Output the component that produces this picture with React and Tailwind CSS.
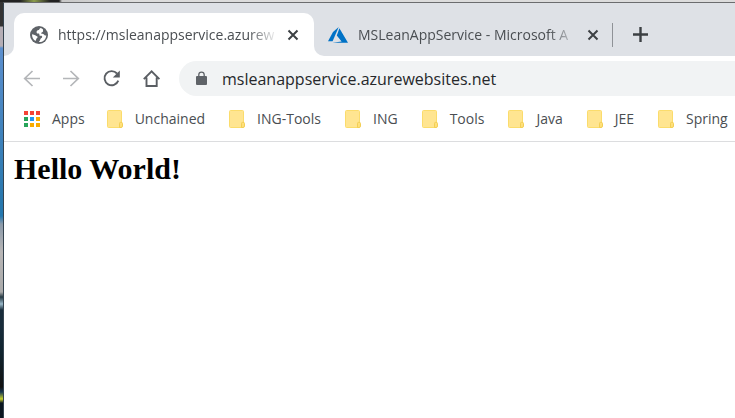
const folders = ["Unchained", "ING-Tools", "ING", "Tools", "Java", "JEE", "Spring"];

function GlobeIcon() {
  return (
    <svg viewBox="0 0 18 18" className="size-[18px] shrink-0" aria-hidden="true">
      <circle cx="9" cy="9" r="9" fill="#5f6368" />
      <path
        d="M10.6 1.900c-1 .5-1.600 1.300-1.500 2.200-1.700-.2-2.700.9-2.500 2.300.1.900 1 1.200 1.900 1.200.8 0 .9.7.9 1.300 0 .8.8.9 1.600.9 1 0 1.300.6 1.100 1.400-.2.700-1 .900-1.500 1.500-.5.700-.2 1.500-1.100 2.300-.3.300-.5.700-.5 1.100 3.900.2 7.200-2.700 7.200-6.900-1.100.6-1.700.1-2.200-.7-.5-.8-1.300-.9-2-.8-.9.100-1-.8-.4-1.300.7-.6 1.500-.5 1.500-1.500 0-.6-.3-.9 0-1.400-.8-.8-1.600-1.300-2.500-1.600z"
        fill="#fff"
      />
      <path
        d="M2 8.300c1.400.1 2.600.5 3.700 1.300.9.600 1.900.7 1.900 1.700 0 .9-1.100.8-1.300 1.700-.1.700-.4 1.300-.9 1.900C3.200 13.600 1.900 11.200 2 8.300z"
        fill="#fff"
      />
    </svg>
  );
}

function AzureIcon() {
  return (
    <svg viewBox="0 0 20 16" className="h-4 w-5 shrink-0" aria-hidden="true">
      <path d="M10.700 0 5 5 0 14.300h4.600z" fill="#0072c6" />
      <path d="m11.400 1.300-2.600 7.200 4.800 6-9.200 1.300H20z" fill="#0072c6" />
    </svg>
  );
}

function CloseIcon() {
  return (
    <svg viewBox="0 0 12 12" className="size-3" aria-hidden="true">
      <path d="M1.500 1.500l9 9M10.500 1.500l-9 9" stroke="#3c4043" strokeWidth="2" />
    </svg>
  );
}

function FolderIcon() {
  return (
    <svg viewBox="0 0 16 18" className="h-[18px] w-4 shrink-0" aria-hidden="true">
      <rect x=".5" y=".5" width="14" height="17" rx="1" fill="#ffe591" stroke="#fbdc6c" />
      <path d="M12.500 17.500v-4q0-1.200 1.200-1.200h.3q1.500 0 1.500 1.200v2.500q0 1.500-1.500 1.500z" fill="#ffe07a" stroke="#f3cf55" />
    </svg>
  );
}

function AppsIcon() {
  const colors = ["#f44336", "#f44336", "#f44336", "#27a55a", "#2196f3", "#f9ab00", "#27a55a", "#f9ab00", "#f9ab00"];
  return (
    <span className="grid shrink-0 grid-cols-3 gap-0.5" aria-hidden="true">
      {colors.map((c, i) => (
        <span key={i} className="size-1" style={{ background: c }} />
      ))}
    </span>
  );
}

function Tab({ icon, title, label }) {
  return (
    <>
      {icon}
      <span className="ml-[10px] w-[220px] overflow-hidden whitespace-nowrap text-sm [mask-image:linear-gradient(to_right,black_190px,transparent_220px)]">
        {title}
      </span>
      <button type="button" aria-label={label} className="ml-[9px]">
        <CloseIcon />
      </button>
    </>
  );
}

export default function App() {
  return (
    <div className="flex min-h-screen flex-col bg-[#dadada] font-['Open_Sans','Noto_Sans',sans-serif] text-[#4a4e52]">
      <div className="h-0.5 bg-[linear-gradient(to_right,#222_0_20px,#8c9d4c_34px,#222_50px_59px,#c8c8c8_62px,#dcdcdc_135px)]" />
      <div className="flex grow">
        <div className="w-[3px] shrink-0 bg-[linear-gradient(to_bottom,#333_0_24px,#b5aeb5_25px_44px,#5c8fce_46px,#2878ae_200px,#2378b0_214px,#8b9aaa_222px,#b8b6b6_250px,#aaa_290px,#263943_295px,#9bb9ca_302px,#182c3b_308px_325px,#10242f_350px,#111_385px,#163750_390px,#c7d12c_397px,#0b1620_401px)]" />
        <div className="flex min-w-0 grow flex-col border-l border-t border-l-[#34434f] border-t-[#6b6c6e] bg-white">
          <header>
            <div className="flex h-[53px]">
              <div className="w-[10px] shrink-0 rounded-br-[10px] bg-[#dee1e6]" />
              <div className="w-[300px] shrink-0 bg-[linear-gradient(to_bottom,#dee1e6_50%,white_50%)] pt-[10px]">
                <div className="flex h-[43px] items-center rounded-t-[10px] bg-white pl-4">
                  <Tab icon={<GlobeIcon />} title="https://msleanappservice.azurew" label="Close first tab" />
                </div>
              </div>
              <div className="flex min-w-0 grow items-center overflow-hidden rounded-bl-[10px] bg-[#dee1e6] pl-[14px] pt-[10px]">
                <Tab icon={<AzureIcon />} title="MSLeanAppService - Microsoft A" label="Close second tab" />
                <span className="ml-[13px] h-6 w-px shrink-0 bg-[#8f9297]" />
                <button type="button" aria-label="New tab" className="ml-5">
                  <svg viewBox="0 0 15 15" className="size-[15px]" aria-hidden="true">
                    <path d="M7.500 0v15M0 7.500h15" stroke="#3c4043" strokeWidth="2.400" />
                  </svg>
                </button>
              </div>
            </div>
            <nav aria-label="Navigation" className="flex h-[45px] items-center pl-[19px]">
              <button type="button" aria-label="Back">
                <svg viewBox="0 0 18 18" className="size-[18px]" fill="none" stroke="#b4b6b9" strokeWidth="1.700" aria-hidden="true">
                  <path d="M17 8.500H2M9.500 1 1.700 8.500l7.800 7.500" />
                </svg>
              </button>
              <button type="button" aria-label="Forward" className="ml-[22px]">
                <svg viewBox="0 0 18 18" className="size-[18px]" fill="none" stroke="#b4b6b9" strokeWidth="1.700" aria-hidden="true">
                  <path d="M0 8.500h15M7.500 1l7.800 7.500-7.800 7.500" />
                </svg>
              </button>
              <button type="button" aria-label="Reload" className="ml-[22px]">
                <svg viewBox="0 0 18 18" className="size-[18px]" aria-hidden="true">
                  <path d="M14 3.500A7.100 7.100 0 1 0 15.300 10.700" fill="none" stroke="#5a5e63" strokeWidth="1.900" />
                  <path d="M16.800.5v7h-7z" fill="#5a5e63" />
                </svg>
              </button>
              <button type="button" aria-label="Home" className="ml-[22px]">
                <svg viewBox="0 0 18 18" className="size-[18px]" fill="none" stroke="#5a5e63" strokeWidth="1.900" aria-hidden="true">
                  <path d="M.8 9.200 8.600 1.400l7.800 7.800M3.500 7.500v8.500h10.200V7.500" />
                </svg>
              </button>
              <div className="ml-[18px] flex h-[35px] min-w-0 grow items-center rounded-l-full bg-[#f1f3f4] pl-[17px]">
                <svg viewBox="0 0 11 15" className="h-[15px] w-[11px] shrink-0" aria-hidden="true">
                  <rect y="5" width="11" height="9" rx="1" fill="#5f6368" />
                  <path d="M2.800 5.500V3.800a2.700 2.700 0 0 1 5.400 0v1.700" fill="none" stroke="#5f6368" strokeWidth="1.300" />
                </svg>
                <input
                  aria-label="Address"
                  defaultValue="msleanappservice.azurewebsites.net"
                  className="ml-[15px] min-w-0 grow bg-transparent text-base text-[#26282b] outline-none"
                />
              </div>
            </nav>
            <nav aria-label="Bookmarks" className="flex h-[41px] items-center overflow-hidden whitespace-nowrap border-b border-[#dcdddf] pb-1 pl-5 text-sm">
              <a href="#apps" className="mr-[22px] flex items-center gap-3">
                <AppsIcon />
                Apps
              </a>
              <div className="flex gap-6">
                {folders.map((name) => (
                  <a key={name} href={"#" + name} className="flex items-center gap-3">
                    <FolderIcon />
                    {name}
                  </a>
                ))}
              </div>
            </nav>
          </header>
          <main className="px-[10px] pt-[9px]">
            <h1 className="font-['Liberation_Serif',serif] text-[30px] font-bold leading-9 text-black">Hello World!</h1>
          </main>
        </div>
      </div>
    </div>
  );
}
